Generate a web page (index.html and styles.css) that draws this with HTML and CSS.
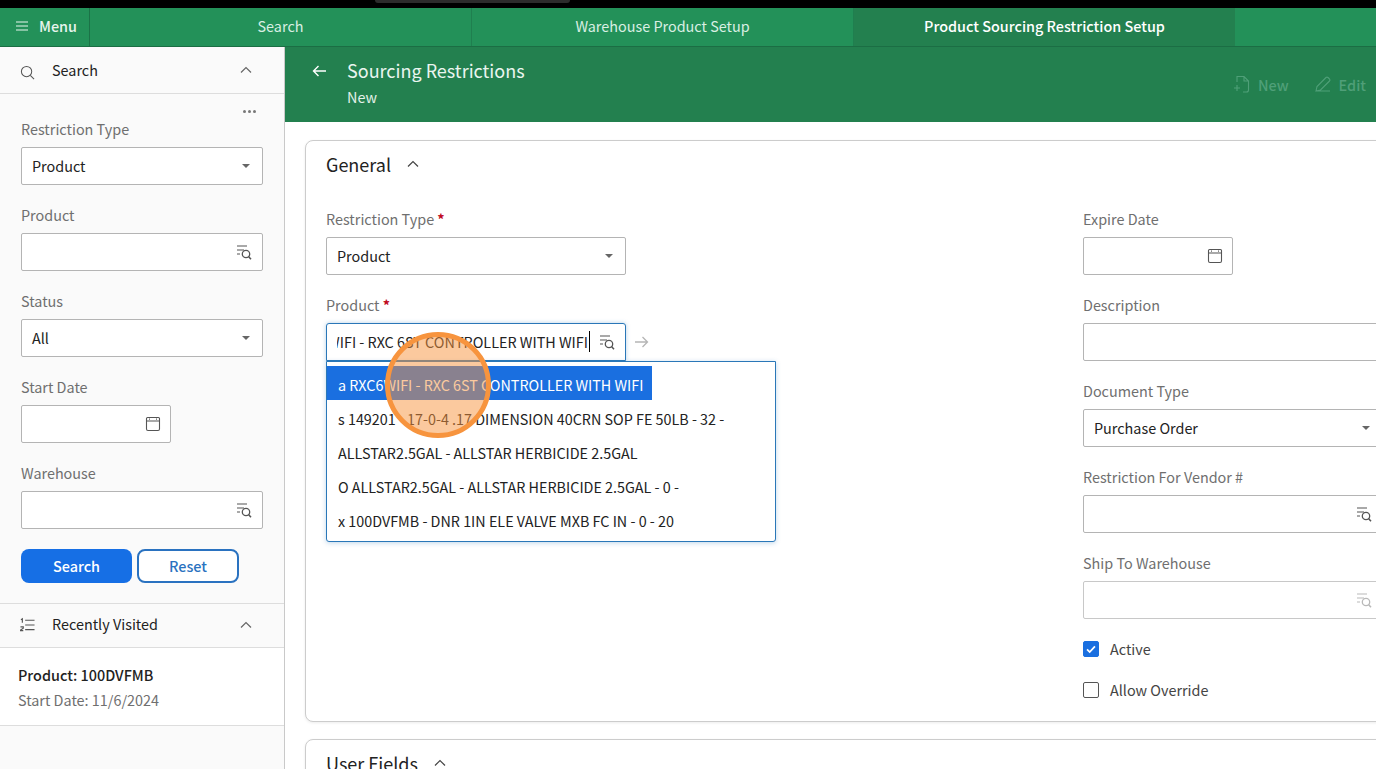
FILE: index.html
```html
<!DOCTYPE html>
<html lang="en">
<head>
    <meta charset="UTF-8">
    <meta name="viewport" content="width=device-width, initial-scale=1.0">
    <title>Sourcing Restrictions</title>
    <link rel="stylesheet" href="styles.css">
</head>
<body>
  <svg class="sprite" xmlns="http://www.w3.org/2000/svg">
    <symbol id="i-lookup" viewBox="0 0 16 16">
      <path d="M1 2h10M1 6h7M1 10h3" fill="none" stroke="currentColor" stroke-width="1.2"/>
      <circle cx="10" cy="10" r="3.7" fill="none" stroke="currentColor" stroke-width="1.3"/>
      <path d="M12.5 12.500l2.500 2.800" fill="none" stroke="currentColor" stroke-width="1.5"/>
    </symbol>
    <symbol id="i-calendar" viewBox="0 0 16 16">
      <path d="M2.5 1.5h11a1 1 0 0 1 1 1v10.5a1.5 1.5 0 0 1-1.5 1.5H3a1.5 1.5 0 0 1-1.5-1.5V2.500a1 1 0 0 1 1-1zM1.500 5h13" fill="none" stroke="currentColor" stroke-width="1.100"/>
      <path d="M4.500 2.500v1.200M11.500 2.500v1.200" stroke="currentColor" stroke-width="1"/>
    </symbol>
    <symbol id="i-chevron" viewBox="0 0 12 8">
      <path d="M1 6.500L6 1.500l5 5" fill="none" stroke="currentColor" stroke-width="1.200"/>
    </symbol>
  </svg>

  <div class="topbar"><div class="notch"></div></div>

  <nav class="tabs">
    <div class="menu-btn">
      <svg class="menu-icon" viewBox="0 0 12 10"><path d="M0 1h12M0 5h12M0 9h12" stroke="currentColor" stroke-width="1.200"/></svg>
      <span>Menu</span>
    </div>
    <div class="tab">Search</div>
    <div class="tab">Warehouse Product Setup</div>
    <div class="tab tab-active">Product Sourcing Restriction Setup</div>
  </nav>

  <div class="layout">
    <aside class="sidebar">
      <div class="side-head">
        <svg class="side-icon side-icon-search" viewBox="0 0 16 16"><circle cx="7" cy="7" r="5.500" fill="none" stroke="currentColor" stroke-width="1.100"/><path d="M11 11l4 4" stroke="currentColor" stroke-width="1.100"/></svg>
        <span class="side-title">Search</span>
        <svg class="chevron"><use href="#i-chevron"/></svg>
      </div>
      <div class="side-form">
        <div class="dots"><i></i><i></i><i></i></div>
        <div class="field">
          <label class="label">Restriction Type</label>
          <div class="input"><span>Product</span><i class="caret"></i></div>
        </div>
        <div class="field">
          <label class="label">Product</label>
          <div class="input"><span></span><svg class="lookup"><use href="#i-lookup"/></svg></div>
        </div>
        <div class="field">
          <label class="label">Status</label>
          <div class="input"><span>All</span><i class="caret"></i></div>
        </div>
        <div class="field">
          <label class="label">Start Date</label>
          <div class="input input-date"><span></span><svg class="calendar"><use href="#i-calendar"/></svg></div>
        </div>
        <div class="field">
          <label class="label">Warehouse</label>
          <div class="input"><span></span><svg class="lookup"><use href="#i-lookup"/></svg></div>
        </div>
        <div class="side-actions">
          <button class="btn btn-search">Search</button>
          <button class="btn btn-reset">Reset</button>
        </div>
      </div>
      <div class="side-head side-head-recent">
        <svg class="side-icon" viewBox="0 0 16 16"><path d="M5.500 3.500h10M5.500 8.500h10M5.500 13.500h10" stroke="currentColor" stroke-width="1.200"/><path d="M1 3l1.500-1v4M.5 10.500h3v1.500l-3 2v.5h3" fill="none" stroke="currentColor" stroke-width="1.200"/></svg>
        <span class="side-title">Recently Visited</span>
        <svg class="chevron"><use href="#i-chevron"/></svg>
      </div>
      <div class="recent">
        <div class="recent-name">Product: 100DVFMB</div>
        <div class="recent-sub">Start Date: 11/6/2024</div>
      </div>
    </aside>

    <main class="main">
      <header class="page-head">
        <svg class="back" viewBox="0 0 14 12"><path d="M14 6H1.500M6.500 1L1.500 6l5 5" fill="none" stroke="currentColor" stroke-width="1.400"/></svg>
        <div class="page-titles">
          <div class="page-title">Sourcing Restrictions</div>
          <div class="page-sub">New</div>
        </div>
        <div class="page-actions">
          <div class="action">
            <svg class="action-icon" viewBox="0 0 16 18"><path d="M3 7V1.500h7l4.500 4.500v9a2 2 0 0 1-2 2H9M10 1.500V6h4.500M0 13h6M3 10v6" fill="none" stroke="currentColor" stroke-width="1.100"/></svg>
            <span>New</span>
          </div>
          <div class="action">
            <svg class="action-icon" viewBox="0 0 16 16"><path d="M1 15l1-4.500L11 1.500a1.500 1.500 0 0 1 2 0l1.500 1.500a1.500 1.500 0 0 1 0 2L5.500 14zM1 15h14" fill="none" stroke="currentColor" stroke-width="1.100"/></svg>
            <span>Edit</span>
          </div>
        </div>
      </header>

      <div class="content">
        <section class="card card-general">
          <div class="card-head">
            <h2 class="card-title">General</h2>
            <svg class="chevron chevron-dark"><use href="#i-chevron"/></svg>
          </div>
          <div class="form-grid">
            <div class="form-col">
              <div class="field">
                <label class="label">Restriction Type <b class="req">*</b></label>
                <div class="input"><span>Product</span><i class="caret"></i></div>
              </div>
              <div class="field field-product">
                <label class="label">Product <b class="req">*</b></label>
                <div class="product-row">
                  <div class="input input-focus">
                    <div class="clip"><span class="clip-text">WIFI - RXC 6ST CONTROLLER WITH WIFI</span></div>
                    <svg class="lookup"><use href="#i-lookup"/></svg>
                  </div>
                  <svg class="go" viewBox="0 0 14 12"><path d="M0 6h12.500M7.500 1l5 5-5 5" fill="none" stroke="currentColor" stroke-width="1.300"/></svg>
                </div>
                <ul class="dropdown">
                  <li class="option option-active">a RXC6WIFI - RXC 6ST CONTROLLER WITH WIFI</li>
                  <li class="option">s 149201 - 17-0-4 .17 DIMENSION 40CRN SOP FE 50LB - 32 -</li>
                  <li class="option">ALLSTAR2.5GAL - ALLSTAR HERBICIDE 2.5GAL</li>
                  <li class="option">O ALLSTAR2.5GAL - ALLSTAR HERBICIDE 2.5GAL - 0 -</li>
                  <li class="option">x 100DVFMB - DNR 1IN ELE VALVE MXB FC IN - 0 - 20</li>
                </ul>
              </div>
            </div>
            <div class="form-col">
              <div class="field">
                <label class="label">Expire Date</label>
                <div class="input input-date"><span></span><svg class="calendar"><use href="#i-calendar"/></svg></div>
              </div>
              <div class="field">
                <label class="label">Description</label>
                <div class="input"><span></span></div>
              </div>
              <div class="field">
                <label class="label">Document Type</label>
                <div class="input"><span>Purchase Order</span><i class="caret"></i></div>
              </div>
              <div class="field">
                <label class="label">Restriction For Vendor #</label>
                <div class="input"><span></span><svg class="lookup"><use href="#i-lookup"/></svg></div>
              </div>
              <div class="field">
                <label class="label">Ship To Warehouse</label>
                <div class="input input-disabled"><span></span><svg class="lookup"><use href="#i-lookup"/></svg></div>
              </div>
              <div class="check-row">
                <span class="check check-on"><svg viewBox="0 0 16 16"><path d="M3.500 8.500l3 3 6-6.500" fill="none" stroke="#fff" stroke-width="2"/></svg></span>
                <span class="check-label">Active</span>
              </div>
              <div class="check-row">
                <span class="check"></span>
                <span class="check-label">Allow Override</span>
              </div>
            </div>
          </div>
        </section>

        <section class="card">
          <div class="card-head">
            <h2 class="card-title">User Fields</h2>
            <svg class="chevron chevron-dark"><use href="#i-chevron"/></svg>
          </div>
        </section>
      </div>
    </main>
  </div>

  <div class="click-marker"></div>
</body>
</html>
```

FILE: styles.css
```css
* {
    box-sizing: border-box;
}

html,
body {
    height: 100%;
}

body {
    margin: 0;
    overflow: hidden;
    font-family: "Noto Sans CJK SC", "Open Sans", sans-serif;
    font-size: 14.4px;
    color: #222222;
    background-color: #ffffff;
}

.sprite {
    display: none;
}

.topbar {
    height: 8px;
    background-color: #000000;
}

.notch {
    width: 195px;
    height: 3px;
    margin-left: 375px;
    background-color: #2c2c2c;
    border-radius: 0 0 4px 4px;
}

.tabs {
    display: flex;
    height: 39px;
    background-color: #239159;
    border-bottom: 1px solid #1b6e44;
    color: #ffffff;
}

.menu-btn {
    display: flex;
    align-items: center;
    gap: 11px;
    width: 90px;
    padding-left: 16px;
    padding-bottom: 3px;
    font-weight: 500;
    border-right: 1px solid #1b7247;
    color: #e8f5ee;
}

.menu-icon {
    width: 12px;
    height: 10px;
}

.tab {
    display: flex;
    align-items: center;
    justify-content: center;
    width: 382px;
    padding-bottom: 3px;
    color: #d9efe3;
    border-right: 1px solid #1f7f4f;
}

.tab-active {
    width: 381px;
    font-weight: 500;
    color: #ffffff;
    background-color: #23804f;
    border-right: none;
}

.layout {
    display: flex;
    height: 722px;
}

.sidebar {
    flex: 0 0 285px;
    background-color: #fafafa;
    border-right: 1px solid #c9c9c9;
}

.side-head {
    display: flex;
    align-items: center;
    height: 47px;
    padding: 0 32px 0 20px;
    border-bottom: 1px solid #dddddd;
}

.side-head-recent {
    height: 45px;
    padding-bottom: 2px;
    border-top: 1px solid #dddddd;
}

.side-icon {
    width: 15px;
    height: 15px;
    color: #555555;
    flex: none;
}

.side-icon-search {
    margin-top: 4px;
}

.side-title {
    flex: 1;
    margin-left: 17px;
    margin-bottom: 2px;
}

.chevron {
    width: 12px;
    height: 8px;
    color: #666666;
}

.chevron-dark {
    color: #444444;
}

.side-form {
    height: 509px;
    padding: 0 21px;
}

.dots {
    display: flex;
    justify-content: flex-end;
    gap: 2px;
    height: 25px;
    padding: 16px 7px 0 0;
}

.dots i {
    width: 3px;
    height: 3px;
    border-radius: 50%;
    background-color: #777777;
}

.field {
    margin-bottom: 20px;
}

.label {
    display: block;
    height: 20px;
    margin-bottom: 8px;
    line-height: 20px;
    color: #6f6f6f;
}

.req {
    color: #c00a1e;
    font-weight: 700;
}

.input {
    display: flex;
    align-items: center;
    justify-content: space-between;
    height: 38px;
    padding: 0 10px;
    background-color: #ffffff;
    border: 1px solid #b4b4b4;
    border-radius: 2px;
}

.input > span {
    margin-bottom: 2px;
}

.form-col .input {
    width: 300px;
}

.form-col .input-date,
.input-date {
    width: 150px;
}

.input-focus {
    border-color: #2a77b8;
    border-radius: 3px 3px 0 0;
    box-shadow: 0 0 4px rgba(42, 119, 184, 0.35);
}

.input-disabled {
    border-color: #c8c8c8;
}

.input-disabled .lookup {
    color: #b9b9b9;
}

.caret {
    width: 0;
    height: 0;
    margin-right: 2px;
    border-left: 4px solid transparent;
    border-right: 4px solid transparent;
    border-top: 4px solid #666666;
}

.lookup {
    width: 16px;
    height: 16px;
    color: #555555;
    flex: none;
}

.calendar {
    width: 16px;
    height: 16px;
    margin-right: -1px;
    color: #555555;
}

.side-actions {
    display: flex;
    gap: 5px;
}

.btn {
    height: 34px;
    padding-bottom: 3px;
    font-family: inherit;
    font-size: 14.4px;
    font-weight: 500;
    border-radius: 8px;
    cursor: pointer;
}

.btn-search {
    width: 111px;
    color: #ffffff;
    background-color: #166fe5;
    border: none;
}

.btn-reset {
    width: 102px;
    color: #2a72c0;
    background-color: #ffffff;
    border: 2px solid #2a72c0;
}

.recent {
    height: 78px;
    padding: 16px 18px 0;
    background-color: #ffffff;
    border-bottom: 1px solid #dddddd;
}

.recent-name {
    height: 25px;
    line-height: 22px;
    font-weight: 500;
}

.recent-sub {
    line-height: 22px;
    color: #6f6f6f;
}

.main {
    flex: 1;
    min-width: 0;
}

.page-head {
    display: flex;
    height: 75px;
    padding-left: 27px;
    background-color: #23804f;
    color: #ffffff;
}

.back {
    width: 14px;
    height: 12px;
    margin-top: 18px;
}

.page-titles {
    margin-left: 21px;
    padding-top: 9px;
}

.page-title {
    font-size: 18px;
    line-height: 28px;
    color: #eaf5ef;
}

.page-sub {
    margin-top: 3px;
    line-height: 20px;
    color: #e2f1e9;
}

.page-actions {
    display: flex;
    gap: 26px;
    margin-left: auto;
    padding: 28px 10px 0 0;
    font-weight: 500;
    color: #4f9f78;
}

.action {
    display: flex;
    align-items: flex-start;
    gap: 8px;
    line-height: 20px;
}

.action-icon {
    width: 16px;
    height: 18px;
}

.content {
    padding: 18px 0 0 20px;
    width: 1120px;
}

.card {
    margin-bottom: 17px;
    background-color: #ffffff;
    border: 1px solid #cccccc;
    border-radius: 8px;
    box-shadow: 0 1px 3px rgba(0, 0, 0, 0.08);
}

.card-general {
    height: 582px;
}

.card-head {
    display: flex;
    align-items: center;
    gap: 16px;
    height: 46px;
    padding-left: 20px;
}

.card-title {
    margin: 0;
    font-size: 18px;
    font-weight: 400;
}

.form-grid {
    display: grid;
    grid-template-columns: 757px 300px;
    margin-left: 20px;
    padding-top: 22px;
}

.field-product {
    position: relative;
}

.product-row {
    display: flex;
    align-items: center;
    gap: 9px;
}

.go {
    width: 14px;
    height: 12px;
    color: #b5b5b5;
}

.clip {
    display: flex;
    justify-content: flex-end;
    flex: 1;
    min-width: 0;
    overflow: hidden;
    margin-right: 9px;
    margin-bottom: 2px;
    white-space: nowrap;
}

.clip-text {
    padding-right: 1px;
    border-right: 1px solid #000000;
}

.dropdown {
    position: absolute;
    top: 66px;
    left: 0;
    z-index: 2;
    width: 450px;
    height: 181px;
    margin: 0;
    padding: 4px 0 0;
    list-style-type: none;
    background-color: #ffffff;
    border: 1px solid #2a77b8;
    border-radius: 0 0 3px 3px;
    box-shadow: 0 1px 5px rgba(42, 119, 184, 0.3);
}

.option {
    width: max-content;
    height: 34px;
    padding: 0 9px 0 11px;
    font-size: 14.35px;
    line-height: 38px;
    white-space: nowrap;
}

.option-active {
    color: #ffffff;
    background-color: #1a6fe0;
}

.check-row {
    display: flex;
    align-items: center;
    gap: 11px;
    height: 20px;
    margin-bottom: 21px;
    color: #444444;
}

.check-row:nth-last-child(2) {
    margin-top: 20px;
}

.check-label {
    margin-bottom: 2px;
}

.check {
    width: 16px;
    height: 16px;
    background-color: #ffffff;
    border: 1px solid #555555;
    border-radius: 2px;
}

.check-on {
    background-color: #1a6fe0;
    border-color: #1a6fe0;
}

.check svg {
    display: block;
    width: 14px;
    height: 14px;
}

.click-marker {
    position: absolute;
    top: 332px;
    left: 385px;
    z-index: 5;
    width: 106px;
    height: 106px;
    background-color: rgba(247, 148, 62, 0.5);
    border: 5px solid #f7943e;
    border-radius: 50%;
}
```
